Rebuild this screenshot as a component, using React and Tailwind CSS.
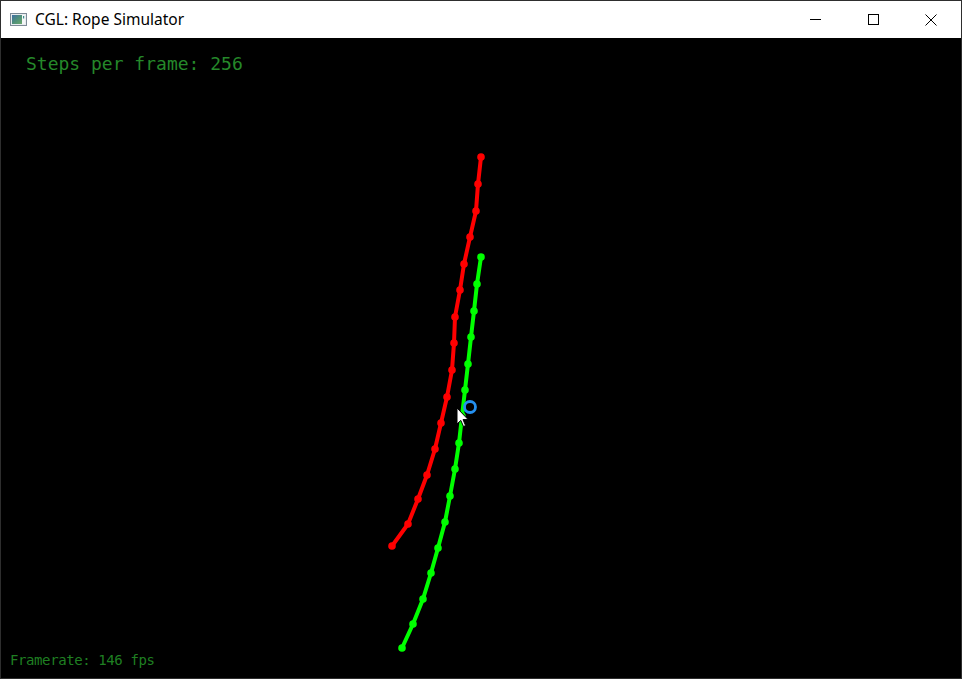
import React from "react";

const red = [[481,157],[478,184],[476,211],[470,237],[464,264],[460,290],[455,317],[454,343],[452,370],[447,397],[441,423],[435,449],[427,475],[418,499],[408,524],[392,546]];
const green = [[481,257],[477,284],[474,311],[471,337],[468,364],[465,390],[462,416],[459,443],[455,469],[450,496],[445,522],[438,548],[431,573],[423,599],[413,624],[402,648]];

function Rope({ pts, color }) {
  return (
    <g>
      <polyline points={pts.map((p) => p.join(",")).join(" ")} fill="none" stroke={color} strokeWidth="4" strokeLinejoin="round" strokeLinecap="round" />
      {pts.map((p, i) => (
        <circle key={i} cx={p[0]} cy={p[1]} r="3.8" fill={color} />
      ))}
    </g>
  );
}

function AppIcon() {
  return (
    <svg width="17" height="13" viewBox="0 0 17 13">
      <defs>
        <linearGradient id="ig" x1="0" y1="0" x2="1" y2="1">
          <stop offset="0" stopColor="#3f6fa3" />
          <stop offset="0.5" stopColor="#4f8f7a" />
          <stop offset="1" stopColor="#6aa86a" />
        </linearGradient>
      </defs>
      <rect x="0.5" y="0.5" width="16" height="12" fill="#e8ecef" stroke="#7d8a96" />
      <rect x="2" y="2" width="10" height="9" fill="url(#ig)" />
      <rect x="12" y="2" width="3" height="9" fill="#f4f6f7" />
      <rect x="13" y="3" width="1.2" height="2.5" fill="#3c8f8a" />
    </svg>
  );
}

export default function App() {
  return (
    <div className="w-[962px] h-[679px] flex flex-col border border-[#2e2e2e] bg-black overflow-hidden">
      <div className="h-[37px] shrink-0 bg-white flex items-center">
        <div className="pl-[9px] pr-[8px] flex items-center">
          <AppIcon />
        </div>
        <span className="text-[15.5px] text-black leading-none" style={{ fontFamily: '"Noto Sans", "Noto Sans CJK SC", sans-serif' }}>
          CGL: Rope Simulator
        </span>
        <div className="ml-auto flex h-full pr-[1px]">
          <div className="w-[58px] h-full flex items-center justify-center">
            <div className="w-[11px] h-[1px] bg-black" />
          </div>
          <div className="w-[58px] h-full flex items-center justify-center">
            <div className="w-[11px] h-[11px] border border-black" />
          </div>
          <div className="w-[58px] h-full flex items-center justify-center">
            <svg width="12" height="12" viewBox="0 0 12 12">
              <path d="M0.5 0.5 L11.5 11.5 M11.5 0.5 L0.5 11.5" stroke="#000" strokeWidth="1" />
            </svg>
          </div>
        </div>
      </div>
      <div className="relative flex-1 bg-black flex flex-col justify-between">
        <div
          className="pl-[25px] pt-[15px] text-[18px] leading-[22px] text-[#25882a]"
          style={{ fontFamily: '"DejaVu Sans Mono", monospace' }}
        >
          Steps per frame: 256
        </div>
        <div
          className="pl-[9px] pb-[10px] text-[14px] leading-[16px] tracking-[-0.4px] text-[#1f7f22]"
          style={{ fontFamily: '"DejaVu Sans Mono", monospace' }}
        >
          Framerate: 146 fps
        </div>
        <svg className="absolute inset-0" width="960" height="640" viewBox="1 38 960 640">
          <Rope pts={red} color="#ff0000" />
          <Rope pts={green} color="#00ff00" />
          <circle cx="470" cy="407" r="5.5" fill="none" stroke="#2490f0" strokeWidth="2.8" />
          <path
            d="M457 408 L457 424 L460.8 420.4 L463.5 426.5 L465.6 425.6 L463 419.6 L468.2 419.6 Z"
            fill="#fff"
            stroke="#000"
            strokeWidth="1"
            strokeLinejoin="round"
          />
        </svg>
      </div>
    </div>
  );
}
